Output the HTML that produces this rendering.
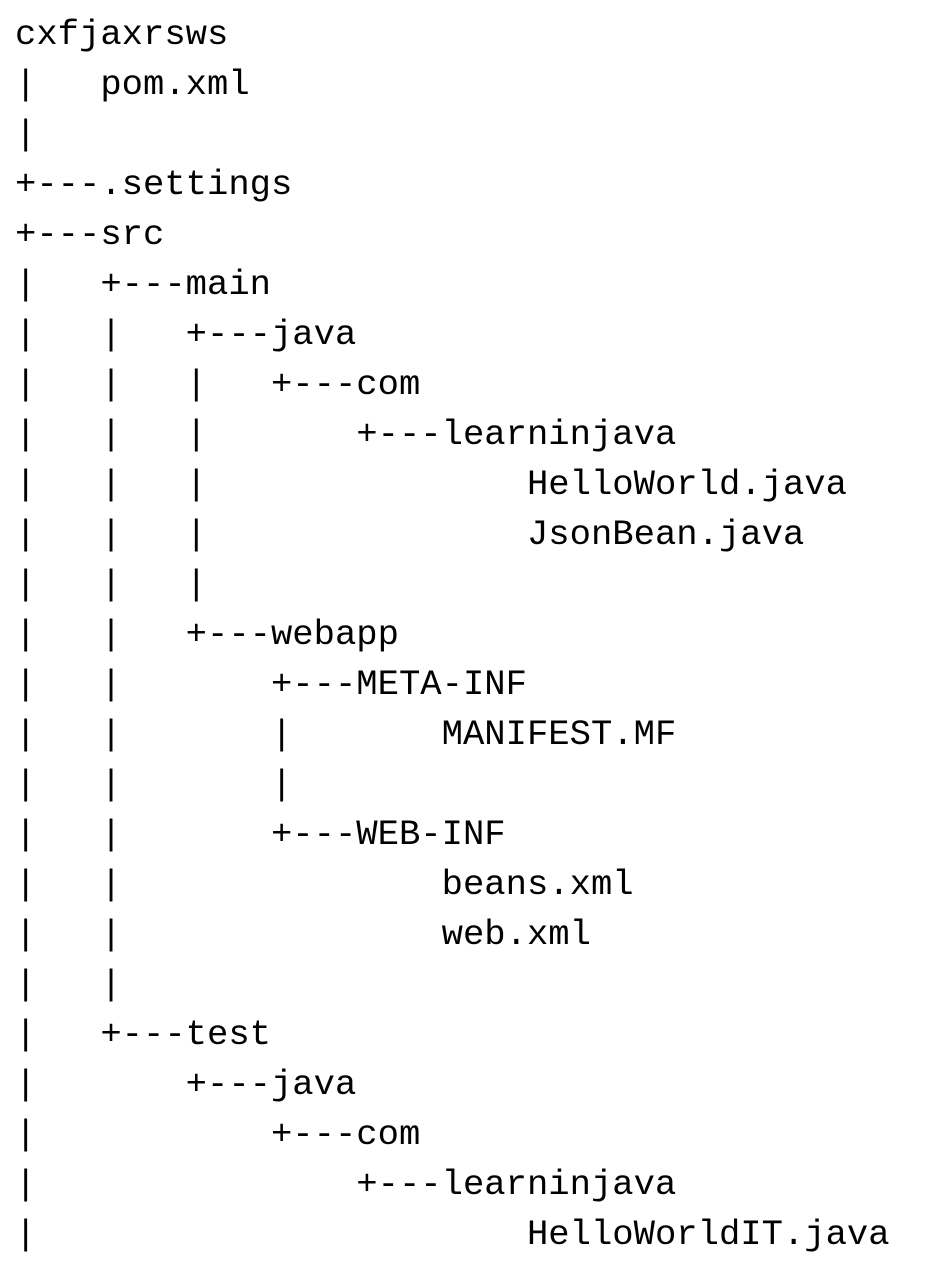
<!DOCTYPE html>
<html><head><meta charset="utf-8"><style>
html,body{margin:0;padding:0;background:#fff;width:943px;height:1284px;overflow:hidden}
pre{margin:0;position:absolute;left:15px;top:10px;font-family:"Liberation Mono",monospace;font-size:35.55px;line-height:50px;color:#000}
</style></head><body><pre>cxfjaxrsws
|   pom.xml
|
+---.settings
+---src
|   +---main
|   |   +---java
|   |   |   +---com
|   |   |       +---learninjava
|   |   |               HelloWorld.java
|   |   |               JsonBean.java
|   |   |
|   |   +---webapp
|   |       +---META-INF
|   |       |       MANIFEST.MF
|   |       |
|   |       +---WEB-INF
|   |               beans.xml
|   |               web.xml
|   |
|   +---test
|       +---java
|           +---com
|               +---learninjava
|                       HelloWorldIT.java</pre></body></html>
